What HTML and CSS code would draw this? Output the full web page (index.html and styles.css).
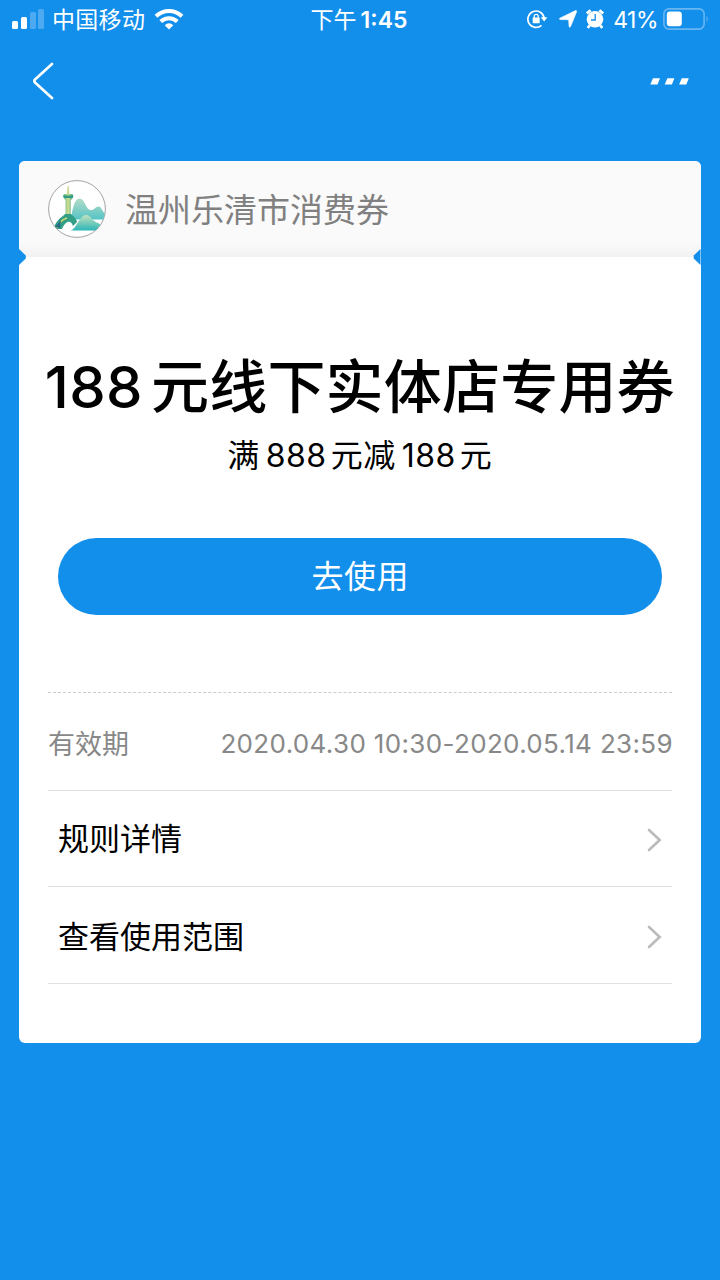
FILE: index.html
```
<!DOCTYPE html>
<html lang="zh-CN">
<head>
    <meta charset="UTF-8">
    <meta name="viewport" content="width=device-width, initial-scale=1.0">
    <title>消费券</title>
    <link rel="stylesheet" href="styles.css">
</head>
<body>
    <div class="status-bar">
        <div class="status-left">
            <svg class="signal" width="32" height="20" viewBox="0 0 32 20" fill="#fff">
                <rect x="0" y="12" width="6" height="8" rx="1.5"/>
                <rect x="9" y="8" width="6" height="12" rx="1.5"/>
                <rect x="18" y="3" width="6" height="17" rx="1.5" opacity="0.25"/>
                <rect x="26" y="0" width="6" height="20" rx="1.5" opacity="0.25"/>
            </svg>
            <span class="carrier">中国移动</span>
            <svg class="wifi" width="30" height="22" viewBox="0 0 30 22">
                <g fill="none" stroke="#fff" stroke-width="4">
                    <path d="M2 8.3C9.5 1.2 20.5 1.2 28 8.3"/>
                    <path d="M6.7 13.5C11.5 9 18.5 9 23.3 13.5"/>
                </g>
                <path d="M10.7 17.2Q15 13.5 19.3 17.2L15 21.4Z" fill="#fff"/>
            </svg>
        </div>
        <div class="status-time">下午<b>1:45</b></div>
        <div class="status-right">
            <svg class="lock" width="20" height="20" viewBox="0 0 20 20">
                <path d="M14.5 16.4A8.2 8.2 0 1 1 17.2 9" fill="none" stroke="#fff" stroke-width="1.7"/>
                <path d="M13.6 8.2H20.4L17.2 12.6Z" fill="#fff"/>
                <rect x="5.7" y="8.6" width="7" height="5.6" rx="0.6" fill="#fff"/>
                <path d="M7.2 9V7.3A2 2 0 0 1 11.2 7.3V9" fill="none" stroke="#fff" stroke-width="1.3"/>
            </svg>
            <svg class="arrow" width="18" height="18" viewBox="0 0 18 18">
                <path d="M0.8 8.2L16.4 0.6Q18 0.2 17.6 1.8L11.6 16.6Q10.6 18.2 10.1 16.4L9.6 9.7L1.3 9.6Q-0.2 9.2 0.8 8.2Z" fill="#fff" stroke="#fff" stroke-width="0.6"/>
            </svg>
            <svg class="alarm" width="18" height="20" viewBox="0 0 18 20">
                <circle cx="9" cy="10.3" r="8.3" fill="#fff"/>
                <path d="M0.8 4.4L4.6 1.2M17.2 4.4L13.4 1.2M3.5 16.5L1.8 19M14.5 16.5L16.2 19" stroke="#fff" stroke-width="2.8"/>
                <path d="M9.2 5V11H5" fill="none" stroke="#128eeb" stroke-width="1.3"/>
            </svg>
            <span class="percent">41%</span>
            <svg class="battery" width="46" height="22" viewBox="0 0 46 22">
                <rect x="0.9" y="0.9" width="40.2" height="20.2" rx="5" fill="none" stroke="#fff" stroke-opacity="0.36" stroke-width="1.6"/>
                <rect x="3.8" y="3.6" width="15" height="14.6" rx="3" fill="#fff"/>
                <path d="M43.6 7.5Q45.6 11 43.6 14.5Z" fill="#fff" opacity="0.42"/>
            </svg>
        </div>
    </div>

    <div class="nav">
        <svg width="22" height="38" viewBox="0 0 22 38" fill="none" stroke="#fff" stroke-width="2.6" stroke-linecap="round" stroke-linejoin="round">
            <path d="M20 2L3 17.5Q1.6 19 3 20.5L20 36"/>
        </svg>
        <svg width="39" height="7" viewBox="0 0 39 7" fill="#fff">
            <path d="M3 0.3H10L7.5 6.5H0.3ZM17.4 0.3H24.4L21.9 6.5H14.7ZM31.8 0.3H38.8L36.3 6.5H29.1Z"/>
        </svg>
    </div>

    <div class="card">
        <div class="card-header">
            <svg class="logo" width="58" height="58" viewBox="0 0 58 58">
                <defs>
                    <linearGradient id="hill" x1="0" y1="0" x2="0" y2="1">
                        <stop offset="0" stop-color="#b3dcc6"/>
                        <stop offset="1" stop-color="#55c3c6"/>
                    </linearGradient>
                    <linearGradient id="front" x1="0" y1="0" x2="0" y2="1">
                        <stop offset="0" stop-color="#c3e2bd"/>
                        <stop offset="1" stop-color="#2bb5b8"/>
                    </linearGradient>
                    <linearGradient id="tower" x1="0" y1="0" x2="1" y2="0">
                        <stop offset="0" stop-color="#58b58c"/>
                        <stop offset="0.5" stop-color="#d3dd8d"/>
                        <stop offset="1" stop-color="#3ba693"/>
                    </linearGradient>
                    <clipPath id="round"><circle cx="29" cy="29" r="28.2"/></clipPath>
                </defs>
                <circle cx="29" cy="29" r="28.4" fill="#fff" stroke="#999" stroke-width="0.9"/>
                <g clip-path="url(#round)">
                    <path d="M23 39.5C24 32 26 18.5 31.5 18.5C37.5 18.5 37 30 43 30C46.5 30 48 26 51 26.5C54 27.5 54 32 58 34V39.5Z" fill="url(#hill)"/>
                    <path d="M19.6 6H20.7L21.4 14H24.6L25.3 17L22.8 20.5V36H17.5V20.5L15.2 17L16 14H19Z" fill="url(#tower)"/>
                    <path d="M15 15.5H25.4L24.4 18H16Z" fill="#2d9b86"/>
                    <path d="M5 49C9 39 13 38 17 34H23C26 37 28 38 29 42L25 46C23 39 17 41 14 49Z" fill="#329f86"/>
                    <path d="M9 48Q12 40 19 38" stroke="#d5dc6e" stroke-width="1.5" fill="none"/>
                    <path d="M7 47L13 40L12 48Z" fill="#236c86"/>
                    <path d="M23 50.5C28 49 32 35 38 35C43 35 45 42 50 43C53 44 54 47 57 50.5Z" fill="url(#front)"/>
                </g>
            </svg>
            <span class="shop-name">温州乐清市消费券</span>
        </div>

        <div class="coupon">
            <h1><span class="num">188</span>元线下实体店专用券</h1>
            <p class="condition">满<span class="num">888</span>元减<span class="num">188</span>元</p>
            <button class="use-btn">去使用</button>
        </div>

        <div class="details">
            <div class="row validity">
                <span class="label">有效期</span>
                <span class="date">2020.04.30 10:30-2020.05.14 23:59</span>
            </div>
            <div class="row link">
                <span class="link-text">规则详情</span>
                <svg class="chevron" width="15" height="24" viewBox="0 0 15 24"><path d="M2 2L12.7 12L2 22"/></svg>
            </div>
            <div class="row link range">
                <span class="link-text">查看使用范围</span>
                <svg class="chevron" width="15" height="24" viewBox="0 0 15 24"><path d="M2 2L12.7 12L2 22"/></svg>
            </div>
        </div>
    </div>
</body>
</html>
```
FILE: styles.css
```
* {
    box-sizing: border-box;
}
body {
    margin: 0;
    min-height: 1280px;
    background-color: #128eeb;
    font-family: Inter, "Noto Sans CJK SC", sans-serif;
    color: #000;
}
svg {
    display: block;
    flex-shrink: 0;
}

/* status bar */
.status-bar {
    display: grid;
    grid-template-columns: 1fr auto 1fr;
    align-items: center;
    height: 40px;
    padding: 0 11px 0 12px;
    color: #fff;
    font-size: 23px;
    line-height: 40px;
}
.status-left,
.status-right {
    display: flex;
    align-items: center;
    height: 38px;
    margin-bottom: 2px;
}
.signal {
    margin-right: 8px;
}
.carrier {
    padding-top: 1px;
    letter-spacing: 0.3px;
}
.wifi {
    margin-left: 9px;
}
.status-time {
    margin-right: 3px;
}
.status-time b {
    margin-left: 4px;
    font-weight: 600;
}
.status-right {
    justify-content: flex-end;
}
.arrow {
    margin: 0 9px 0 12px;
}
.percent {
    margin: 0 5px 0 9px;
    padding-top: 2px;
    letter-spacing: -0.5px;
}

/* navigation */
.nav {
    display: flex;
    justify-content: space-between;
    align-items: center;
    height: 82px;
    padding: 0 31px 0 32px;
}

/* coupon card */
.card {
    height: 882px;
    margin: 39px 19.5px 0 19px;
    border-radius: 6px;
    background-color: #fff;
}
.card-header {
    position: relative;
    display: flex;
    align-items: center;
    height: 96px;
    padding-left: 29px;
    border-radius: 6px 6px 0 0;
    background: linear-gradient(#fafafa 85%, #f2f2f2);
}
/* side notches */
.card-header::before,
.card-header::after {
    content: "";
    position: absolute;
    bottom: -8px;
    width: 8px;
    height: 16px;
    background-color: #128eeb;
}
.card-header::before {
    left: 0;
    clip-path: polygon(0 0, 85% 40%, 85% 60%, 0 100%);
}
.card-header::after {
    right: 0;
    clip-path: polygon(100% 0, 15% 40%, 15% 60%, 100% 100%);
}
.shop-name {
    margin-left: 19px;
    padding-bottom: 3px;
    font-size: 33px;
    color: #808080;
}
.coupon {
    display: flex;
    flex-direction: column;
    align-items: center;
    padding-top: 86px;
}
h1 {
    margin: 0;
    font-size: 58px;
    font-weight: 500;
    line-height: 88px;
    letter-spacing: 0.2px;
    white-space: nowrap;
}
h1 .num {
    margin-right: 8px;
    letter-spacing: 0.4px;
}
.condition {
    margin: 0;
    font-size: 32px;
    line-height: 50px;
    letter-spacing: 0.5px;
}
.condition .num {
    margin: 0 4px 0 6px;
}
.use-btn {
    width: 604px;
    height: 77px;
    margin: 57px 0 0 1px;
    padding: 0 6px 5px;
    border: none;
    border-radius: 39px;
    background-color: #128eeb;
    color: #fff;
    font-family: inherit;
    font-size: 32px;
    letter-spacing: 0.5px;
}
.details {
    margin: 77px 28.5px 0 29px;
    border-top: 1px dashed #ccc;
}
.row {
    display: flex;
    justify-content: space-between;
    align-items: center;
    height: 96px;
    border-bottom: 1px solid #e2e2e2;
}
.validity {
    height: 98px;
    padding-top: 3px;
    font-size: 26px;
    color: #888;
}
.label {
    padding-bottom: 2px;
    font-size: 27px;
}
.date {
    margin-right: -1px;
    letter-spacing: 0.35px;
}
.link {
    padding: 2px 10px 0;
    font-size: 31px;
}
.link-text {
    padding-bottom: 6px;
}
.range {
    height: 97px;
    padding-top: 4px;
}
.chevron path {
    fill: none;
    stroke: #bbb;
    stroke-width: 2.6;
    stroke-linecap: round;
}
```
